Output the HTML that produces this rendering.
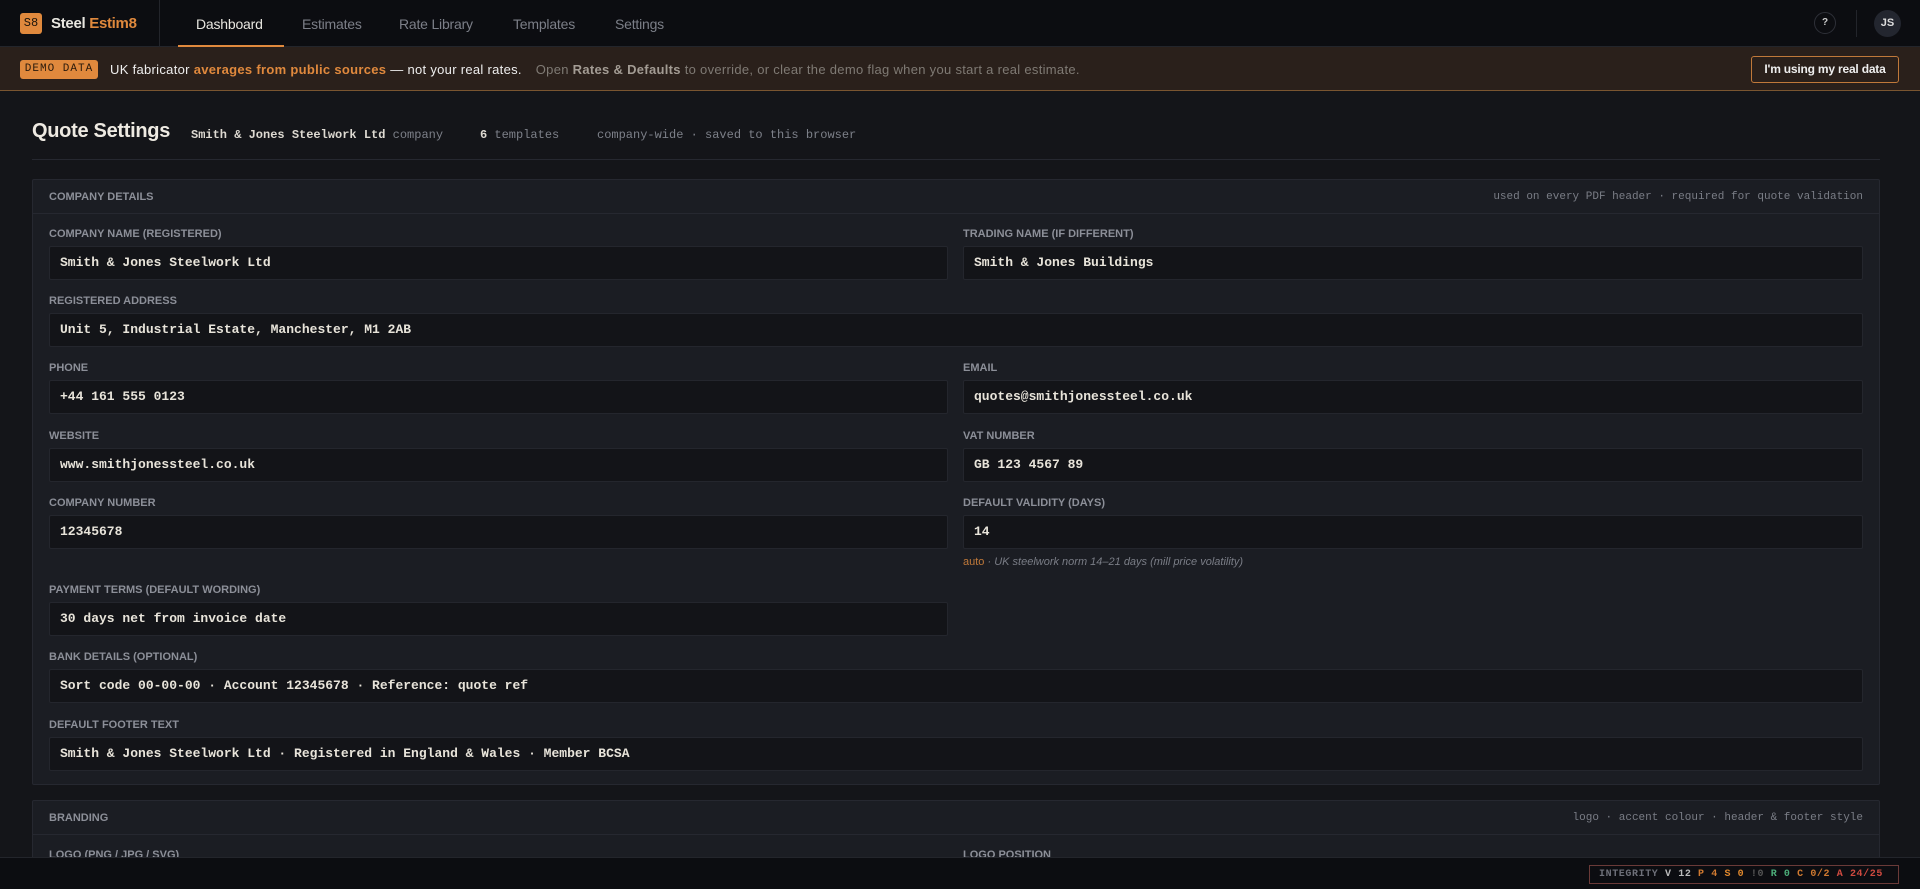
<!DOCTYPE html>
<html style="overflow:hidden;height:889px"><head><meta charset="utf-8"><style>
*{box-sizing:border-box;margin:0;padding:0}
body{width:1920px;height:889px;overflow:hidden;background:#141519;font-family:"Liberation Sans",sans-serif;color:#e8e6e0;position:relative}
.nav{position:absolute;left:0;top:0;width:1920px;height:47px;background:#0c0d11;border-bottom:1px solid #23252b}
.logo{position:absolute;left:20px;top:13px;width:22px;height:21px;background:#e0893d;border-radius:3px;color:#1b140c;font:12px "Liberation Mono",monospace;text-align:center;line-height:21px}
.brand{position:absolute;left:51px;top:15px;font-size:15px;font-weight:bold;color:#e8e6e0;letter-spacing:-0.3px}
.brand span{color:#e0893d}
.vdiv{position:absolute;left:159px;top:0;width:1px;height:47px;background:#23252b}
.tab{position:absolute;top:16px;font-size:14px;color:#7c7f88;letter-spacing:-0.2px}
.tab.on{color:#e8e6e0}
.ul{position:absolute;left:178px;top:45px;width:106px;height:2px;background:#e0893d}
.help{position:absolute;left:1814px;top:12px;width:22px;height:22px;border:1px solid #2e3038;border-radius:50%;font-size:10px;text-align:center;line-height:20px;color:#ccc;font-weight:bold}
.av{position:absolute;left:1874px;top:10px;width:27px;height:27px;background:#23262f;border-radius:50%;font-size:11px;text-align:center;line-height:27px;color:#ddd;font-weight:bold}
.banner{position:absolute;left:0;top:47px;width:1920px;height:44px;background:#2a201b;border-bottom:1px solid #7a5530}
.badge{position:absolute;left:20px;top:13px;width:78px;height:19px;background:#e0893d;border-radius:3px;font:11px "Liberation Mono",monospace;color:#2a1a0c;text-align:center;line-height:19px;letter-spacing:1px}
.btxt{position:absolute;left:110px;top:15px;font-size:13px;color:#eee;white-space:nowrap;letter-spacing:0.3px}
.btxt .o{color:#e0893d;font-weight:bold}
.btxt .g{color:#7f7a74;margin-left:10px}
.btxt .g b{color:#a39c94}
.rbtn{position:absolute;left:1751px;top:9px;width:148px;height:27px;border:1px solid #c0793a;border-radius:3px;font-size:12px;font-weight:bold;text-align:center;line-height:25px;color:#eee;letter-spacing:-0.2px}
h1{position:absolute;left:32px;top:120px;font-size:20px;font-weight:bold;color:#eeeae2;letter-spacing:-0.3px}
.meta{position:absolute;top:128px;font:12px "Liberation Mono",monospace;color:#7d8089;white-space:nowrap}
.meta b{color:#dedad2}
.hr{position:absolute;left:32px;top:159px;width:1848px;height:1px;background:#262830}
.card{position:absolute;left:32px;width:1848px;background:#1b1d23;border:1px solid #262830;border-radius:2px;overflow:hidden}
.ch{height:34px;border-bottom:1px solid #262830;position:relative}
.ch .t{position:absolute;left:16px;top:11px;font-size:11px;font-weight:bold;color:#8c8f98}
.ch .r{position:absolute;right:16px;top:11px;font:11px "Liberation Mono",monospace;color:#7a7d86}
.lbl{position:absolute;font-size:11px;font-weight:bold;color:#8c8f98;white-space:nowrap}
.in{position:absolute;height:34px;background:#131418;border:1px solid #24262d;border-radius:2px;font:bold 13px "Liberation Mono",monospace;color:#e8e4da;line-height:32px;padding-left:10px;white-space:nowrap}
.L{left:16px;width:899px}.R{left:930px;width:900px}.F{left:16px;width:1814px}
.foot{position:absolute;left:0;top:857px;width:1920px;height:32px;background:#0c0d11;border-top:1px solid #23252b}
.integ{position:absolute;left:1589px;top:7px;width:310px;height:19px;border:1px solid #6a3a38;font:bold 10px "Liberation Mono",monospace;line-height:17px;padding-left:9px;white-space:nowrap;letter-spacing:0.6px;overflow:hidden}
</style></head><body>
<div class="nav">
<div class="logo">S8</div><div class="brand">Steel <span>Estim8</span></div>
<div class="vdiv"></div>
<div class="tab on" style="left:196px">Dashboard</div>
<div class="tab" style="left:302px">Estimates</div>
<div class="tab" style="left:399px">Rate Library</div>
<div class="tab" style="left:513px">Templates</div>
<div class="tab" style="left:615px">Settings</div>
<div class="ul"></div>
<div class="help">?</div>
<div style="position:absolute;left:1856px;top:10px;width:1px;height:27px;background:#23252b"></div>
<div class="av">JS</div>
</div>
<div class="banner">
<div class="badge">DEMO DATA</div>
<div class="btxt">UK fabricator <span class="o">averages from public sources</span> — not your real rates. <span class="g">Open <b>Rates &amp; Defaults</b> to override, or clear the demo flag when you start a real estimate.</span></div>
<div class="rbtn">I'm using my real data</div>
</div>
<h1>Quote Settings</h1>
<div class="meta" style="left:191px"><b>Smith &amp; Jones Steelwork Ltd</b> company</div>
<div class="meta" style="left:480px"><b>6</b> templates</div>
<div class="meta" style="left:597px">company-wide · saved to this browser</div>
<div class="hr"></div>

<div class="card" style="top:179px;height:606px">
<div class="ch"><div class="t">COMPANY DETAILS</div><div class="r">used on every PDF header · required for quote validation</div></div>
<div class="lbl" style="left:16px;top:48px">COMPANY NAME (REGISTERED)</div>
<div class="lbl" style="left:930px;top:48px">TRADING NAME (IF DIFFERENT)</div>
<div class="in L" style="top:66px">Smith &amp; Jones Steelwork Ltd</div>
<div class="in R" style="top:66px">Smith &amp; Jones Buildings</div>
<div class="lbl" style="left:16px;top:115px">REGISTERED ADDRESS</div>
<div class="in F" style="top:133px">Unit 5, Industrial Estate, Manchester, M1 2AB</div>
<div class="lbl" style="left:16px;top:182px">PHONE</div>
<div class="lbl" style="left:930px;top:182px">EMAIL</div>
<div class="in L" style="top:200px">+44 161 555 0123</div>
<div class="in R" style="top:200px">quotes@smithjonessteel.co.uk</div>
<div class="lbl" style="left:16px;top:250px">WEBSITE</div>
<div class="lbl" style="left:930px;top:250px">VAT NUMBER</div>
<div class="in L" style="top:268px">www.smithjonessteel.co.uk</div>
<div class="in R" style="top:268px">GB 123 4567 89</div>
<div class="lbl" style="left:16px;top:317px">COMPANY NUMBER</div>
<div class="lbl" style="left:930px;top:317px">DEFAULT VALIDITY (DAYS)</div>
<div class="in L" style="top:335px">12345678</div>
<div class="in R" style="top:335px">14</div>
<div style="position:absolute;left:930px;top:376px;font-size:11px;color:#7a7d86;font-style:italic"><span style="color:#c0793a;font-style:normal">auto</span> · UK steelwork norm 14–21 days (mill price volatility)</div>
<div class="lbl" style="left:16px;top:404px">PAYMENT TERMS (DEFAULT WORDING)</div>
<div class="in L" style="top:422px">30 days net from invoice date</div>
<div class="lbl" style="left:16px;top:471px">BANK DETAILS (OPTIONAL)</div>
<div class="in F" style="top:489px">Sort code 00-00-00 · Account 12345678 · Reference: quote ref</div>
<div class="lbl" style="left:16px;top:539px">DEFAULT FOOTER TEXT</div>
<div class="in F" style="top:557px">Smith &amp; Jones Steelwork Ltd · Registered in England &amp; Wales · Member BCSA</div>
</div>

<div class="card" style="top:800px;height:60px">
<div class="ch"><div class="t">BRANDING</div><div class="r">logo · accent colour · header &amp; footer style</div></div>
<div class="lbl" style="left:16px;top:48px">LOGO (PNG / JPG / SVG)</div>
<div class="lbl" style="left:930px;top:48px">LOGO POSITION</div>
</div>

<div class="foot"><div class="integ"><span style="color:#6e7079">INTEGRITY</span> <span style="color:#bbb">V 12</span> <span style="color:#d07a30">P 4</span> <span style="color:#e0892d">S 0</span> <span style="color:#555">!0</span> <span style="color:#4caf7a">R 0</span> <span style="color:#d07a30">C 0/2</span> <span style="color:#d04a40">A 24/25</span></div></div>
</body></html>
